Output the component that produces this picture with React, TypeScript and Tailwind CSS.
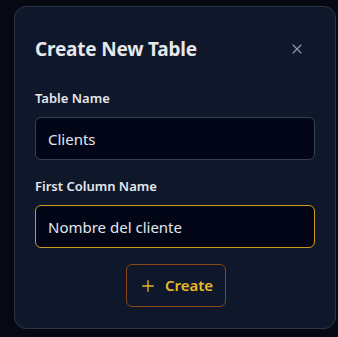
import { Plus, X } from 'lucide-react';

export default function App() {
  return (
    <div className="min-h-[337px] w-[338px] bg-[#060911] pl-[14px] pt-[6px] font-['Noto_Sans',sans-serif]">
      <div className="w-[322px] rounded-xl border border-[#2c3649] bg-[#0f172a] px-5 pt-[30px] pb-[21px]">
        {/* Header */}
        <div className="flex items-center justify-between">
          <h2 className="text-[19px] font-bold leading-6 tracking-[-0.2px] text-[#e5e7eb]">Create New Table</h2>
          <button className="mr-[10px] text-[#8b97ab]">
            <X size={16} strokeWidth={1.75} />
          </button>
        </div>

        {/* Table name */}
        <div className="mt-[27px]">
          <label className="block text-[13px] font-semibold leading-5 text-[#e5e7eb]">
            Table Name
          </label>
          <input
            readOnly
            value="Clients"
            className="mt-[9px] h-[43px] w-full rounded-md border border-[#334155] bg-[#020617] px-3 text-[15px] text-[#e2e8f0] outline-none"
          />
        </div>

        {/* First column */}
        <div className="mt-[16px]">
          <label className="block text-[13px] font-semibold leading-5 text-[#e5e7eb]">
            First Column Name
          </label>
          <input
            readOnly
            value="Nombre del cliente"
            className="mt-[9px] h-[43px] w-full rounded-md border border-[#d19a1c] bg-[#020617] px-3 text-[15px] text-[#e2e8f0] outline-none"
          />
        </div>

        <div className="mt-[16px] flex justify-center">
          <button className="ml-[2px] flex h-[43px] w-[100px] items-center justify-center gap-2 rounded-md border border-[#8a4814] text-[15px] font-semibold text-[#e8b92a]">
            <Plus size={18} strokeWidth={1.75} />
            Create
          </button>
        </div>
      </div>
    </div>
  );
}
